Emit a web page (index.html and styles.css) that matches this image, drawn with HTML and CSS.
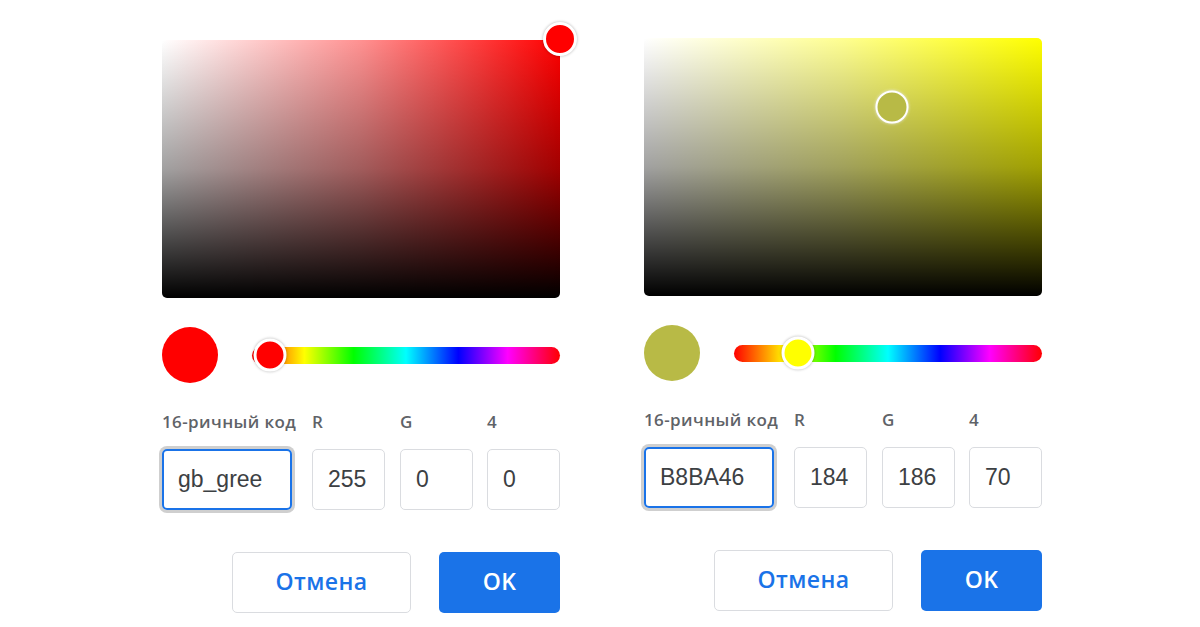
FILE: index.html
```html
<!DOCTYPE html>
<html lang="ru">
<head>
<meta charset="utf-8">
<title>Color pickers</title>
<link rel="stylesheet" href="styles.css">
</head>
<body>
<div class="page">
  <section class="picker">
    <div class="sv sv--red">
      <span class="sv-handle sv-handle--red"></span>
    </div>
    <div class="hue-row">
      <span class="swatch swatch--red"></span>
      <div class="hue-bar">
        <span class="hue-handle hue-handle--red"></span>
      </div>
    </div>
    <div class="fields">
      <span class="label">16-ричный код</span>
      <span class="label">R</span>
      <span class="label">G</span>
      <span class="label">4</span>
      <div class="input input--hex">gb_gree</div>
      <div class="input">255</div>
      <div class="input">0</div>
      <div class="input input--last">0</div>
    </div>
    <div class="actions">
      <button class="btn btn--cancel">Отмена</button>
      <button class="btn btn--ok">OK</button>
    </div>
  </section>

  <section class="picker picker--right">
    <div class="sv sv--yellow">
      <span class="sv-handle sv-handle--ring"></span>
    </div>
    <div class="hue-row">
      <span class="swatch swatch--olive"></span>
      <div class="hue-bar">
        <span class="hue-handle hue-handle--yellow"></span>
      </div>
    </div>
    <div class="fields">
      <span class="label">16-ричный код</span>
      <span class="label">R</span>
      <span class="label">G</span>
      <span class="label">4</span>
      <div class="input input--hex">B8BA46</div>
      <div class="input">184</div>
      <div class="input">186</div>
      <div class="input input--last">70</div>
    </div>
    <div class="actions">
      <button class="btn btn--cancel">Отмена</button>
      <button class="btn btn--ok">OK</button>
    </div>
  </section>
</div>
</body>
</html>
```

FILE: styles.css
```css
* { box-sizing: border-box; }

html, body {
  margin: 0;
  padding: 0;
  background: #ffffff;
  font-family: "Open Sans", Roboto, "Liberation Sans", sans-serif;
}

.page {
  display: flex;
  gap: 84px;
  padding: 40px 0 0 162px;
  width: 1200px;
  height: 627px;
  overflow: hidden;
}

.picker {
  width: 398px;
  display: flex;
  flex-direction: column;
}

.picker--right {
  margin-top: -2px;
}

.sv {
  position: relative;
  width: 398px;
  height: 258px;
  border-radius: 5px;
}

.sv--red {
  background:
    linear-gradient(to top, rgba(0,0,0,1) 0%, rgba(0,0,0,0.37) 50%, rgba(0,0,0,0) 100%),
    linear-gradient(to right, #fff 0%, rgb(255,145,145) 50%, #ff0000 100%);
}

.sv--yellow {
  background:
    linear-gradient(to top, rgba(0,0,0,1) 0%, rgba(0,0,0,0.37) 50%, rgba(0,0,0,0) 100%),
    linear-gradient(to right, #fff 0%, rgb(255,255,145) 50%, #ffff00 100%);
}

.sv-handle {
  position: absolute;
  width: 34px;
  height: 34px;
  border-radius: 50%;
  transform: translate(-50%, -50%);
}

.sv-handle--red {
  left: 398px;
  top: -1px;
  background: #ff0000;
  border: 3px solid #fff;
  box-shadow: 0 0 3px rgba(0,0,0,0.3);
}

.sv-handle--ring {
  left: 248px;
  top: 69px;
  width: 33px;
  height: 33px;
  background: #b8ba46;
  border: 2.5px solid #fff;
  box-shadow: 0 0 3px rgba(255,255,255,0.9), 0 0 2px rgba(0,0,0,0.15);
}

.hue-row {
  display: flex;
  align-items: center;
  gap: 34px;
  margin-top: 29px;
  height: 56px;
}

.swatch {
  width: 56px;
  height: 56px;
  border-radius: 50%;
  flex: none;
}

.swatch--red { background: #ff0000; }
.swatch--olive { background: #b8ba46; }

.hue-bar {
  position: relative;
  flex: 1;
  height: 17px;
  border-radius: 9px;
  background: linear-gradient(to right,
    #ff0000 0%, #ffff00 17%, #00ff00 33%, #00ffff 50%,
    #0000ff 67%, #ff00ff 83%, #ff0000 100%);
}

.hue-handle {
  position: absolute;
  top: 50%;
  width: 33px;
  height: 33px;
  border-radius: 50%;
  border: 3px solid #fff;
  box-shadow: 0 0 3px rgba(0,0,0,0.3);
  transform: translate(-50%, -50%);
}

.hue-handle--red { left: 18px; background: #ff0000; }
.hue-handle--yellow { left: 64px; background: #ffff00; }

.fields {
  display: grid;
  grid-template-columns: 150px 88px 87px 73px;
  grid-template-rows: 20px 61px;
  row-gap: 17px;
  margin-top: 29px;
}

.label {
  font-size: 17px;
  line-height: 20px;
  font-weight: 600;
  letter-spacing: 0.4px;
  color: #5f6368;
  white-space: nowrap;
}

.input {
  width: 73px;
  height: 61px;
  border: 1px solid #dadce0;
  border-radius: 5px;
  padding-left: 15px;
  display: flex;
  align-items: center;
  font-family: "Liberation Sans", Arial, sans-serif;
  font-size: 23px;
  color: #3c4043;
}

.input--hex {
  width: 130px;
  border: 2px solid #1a73e8;
  padding-left: 14px;
  box-shadow: 0 0 0 3px #cfcfcf;
  border-radius: 5px;
}

.actions {
  display: flex;
  justify-content: flex-end;
  gap: 28px;
  margin-top: 42px;
}

.btn {
  height: 61px;
  border-radius: 5px;
  font-family: "Open Sans", Roboto, "Liberation Sans", sans-serif;
  font-size: 23px;
  font-weight: 600;
  letter-spacing: 0.4px;
  padding: 0 0 3px;
  cursor: pointer;
}

.btn--cancel {
  width: 179px;
  background: #fff;
  color: #1a73e8;
  border: 1px solid #dadce0;
}

.btn--ok {
  width: 121px;
  background: #1a73e8;
  color: #fff;
  border: none;
}
```
